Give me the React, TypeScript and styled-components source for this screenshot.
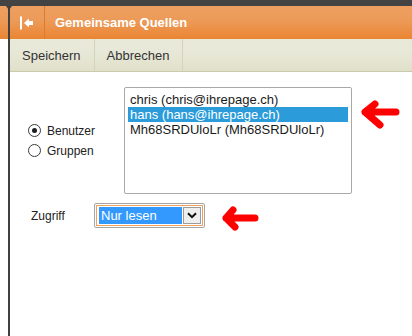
import React from "react";
import styled, { createGlobalStyle } from "styled-components";

// styled-components----------------------------------------------------------------

const GlobalStyle = createGlobalStyle`
  html, body, #root {
    height: 100%;
  }
  body {
    margin: 0;
    background: #ffffff;
    font-family: "Liberation Sans", Arial, sans-serif;
  }
`;

const Page = styled.div`
  position: relative;
  display: flex;
  flex-direction: column;
  height: 100%;
  overflow: hidden;
`;

const TopBar = styled.div`
  height: 6px;
  background: #434343;
  flex-shrink: 0;
`;

const Main = styled.div`
  display: flex;
  flex: 1;
`;

const orange = `linear-gradient(to bottom, #ee9f60 0%, #ec9a58 45%, #ea8531 100%)`;

const LeftStrip = styled.div`
  width: 8px;
  flex-shrink: 0;
`;

const StripHeader = styled.div`
  height: 33px;
  background: ${orange};
`;

const Divider = styled.div`
  position: relative;
  width: 2px;
  flex-shrink: 0;
  background: #404040;

  &::before {
    content: "";
    position: absolute;
    top: 0;
    left: -2px;
    border-left: 3px solid transparent;
    border-right: 3px solid transparent;
    border-top: 4px solid #404040;
  }
`;

const Panel = styled.div`
  flex: 1;
  display: flex;
  flex-direction: column;
`;

const Header = styled.div`
  height: 33px;
  display: flex;
  align-items: stretch;
  background: ${orange};
`;

const BackButton = styled.div`
  width: 34px;
  display: flex;
  align-items: center;
  justify-content: center;
  border-right: 1px solid #dd7a2c;
`;

const Title = styled.div`
  display: flex;
  align-items: center;
  padding-left: 10px;
  color: #ffffff;
  font-size: 13px;
  font-weight: bold;
`;

const Toolbar = styled.div`
  height: 32px;
  display: flex;
  background: linear-gradient(to bottom, #e9e9da 0%, #e8e8d8 40%, #e0e0ca 100%);
  border-bottom: 1px solid #cbcbac;
`;

const ToolButton = styled.div`
  display: flex;
  align-items: center;
  padding: 0 13px 0 12px;
  border-right: 1px solid #d3d3b6;
  color: #333333;
  font-size: 13px;
`;

const Content = styled.div`
  padding-top: 15px;
`;

const UserRow = styled.div`
  display: flex;
  align-items: center;
  padding-left: 18px;
`;

const RadioGroup = styled.div`
  width: 96px;
  display: flex;
  flex-direction: column;
`;

const RadioItem = styled.div`
  height: 20px;
  display: flex;
  align-items: center;
  gap: 6px;
  font-size: 12px;
  color: #222222;
`;

const RadioCircle = styled.span<{ $checked?: boolean }>`
  width: 13px;
  height: 13px;
  box-sizing: border-box;
  border-radius: 50%;
  border: 1px solid #3a3a3a;
  background: #ffffff;
  display: flex;
  align-items: center;
  justify-content: center;

  &::after {
    content: "";
    width: 5px;
    height: 5px;
    border-radius: 50%;
    background: ${(p) => (p.$checked ? "#1e1e1e" : "transparent")};
  }
`;

const ListBox = styled.div`
  width: 228px;
  height: 107px;
  box-sizing: border-box;
  border: 1px solid #a8a8a8;
  border-radius: 2px;
  padding: 4px 3px;
`;

const ListItem = styled.div<{ $selected?: boolean }>`
  height: 15px;
  line-height: 15px;
  padding-left: 2px;
  font-size: 13px;
  white-space: nowrap;
  color: ${(p) => (p.$selected ? "#ffffff" : "#1a1a1a")};
  background: ${(p) => (p.$selected ? "#2c9bd9" : "transparent")};
`;

const AccessRow = styled.div`
  display: flex;
  align-items: center;
  margin-top: 9px;
  padding-left: 21px;
`;

const AccessLabel = styled.div`
  width: 63px;
  font-size: 12px;
  color: #222222;
`;

const SelectOuter = styled.div`
  width: 111px;
  height: 25px;
  box-sizing: border-box;
  border: 1px solid #a5a5a5;
  border-radius: 2px;
  padding: 1px;
`;

const SelectInner = styled.div`
  height: 100%;
  box-sizing: border-box;
  border: 1px solid #efa260;
  padding: 1px 1px 1px 2px;
  display: flex;
  gap: 1px;
`;

const SelectValue = styled.div`
  flex: 1;
  background: #3399ff;
  color: #ffffff;
  font-size: 13px;
  line-height: 17px;
  padding-left: 2px;
`;

const SelectButton = styled.div`
  width: 18px;
  box-sizing: border-box;
  border: 1px solid #9c9c9c;
  background: #efefef;
  display: flex;
  align-items: center;
  justify-content: center;
`;

const Annotations = styled.svg`
  position: absolute;
  top: 0;
  left: 0;
  pointer-events: none;
`;

// ---------------------------------------------------------------------------------

const users = [
  { name: "chris", mail: "chris@ihrepage.ch" },
  { name: "hans", mail: "hans@ihrepage.ch", selected: true },
  { name: "Mh68SRDUloLr", mail: "Mh68SRDUloLr" },
];

const CollapseIcon = () => (
  <svg width="14" height="14" viewBox="0 0 14 14">
    <rect x="0" y="0.5" width="2" height="13" fill="#ffffff" />
    <polygon points="4,7 9,2.5 9,11.5" fill="#ffffff" />
    <rect x="8.5" y="5" width="4.5" height="4" fill="#ffffff" />
  </svg>
);

const Chevron = () => (
  <svg width="10" height="7" viewBox="0 0 10 7">
    <path d="M1 1.2 L5 5.2 L9 1.2" fill="none" stroke="#111111" strokeWidth="2" />
  </svg>
);

export default function App() {
  return (
    <Page>
      <GlobalStyle />
      <TopBar />
      <Main>
        <LeftStrip>
          <StripHeader />
        </LeftStrip>
        <Divider />
        <Panel>
          <Header>
            <BackButton>
              <CollapseIcon />
            </BackButton>
            <Title>Gemeinsame Quellen</Title>
          </Header>
          <Toolbar>
            <ToolButton>Speichern</ToolButton>
            <ToolButton>Abbrechen</ToolButton>
          </Toolbar>
          <Content>
            <UserRow>
              <RadioGroup>
                <RadioItem>
                  <RadioCircle $checked />
                  Benutzer
                </RadioItem>
                <RadioItem>
                  <RadioCircle />
                  Gruppen
                </RadioItem>
              </RadioGroup>
              <ListBox>
                {users.map((u) => (
                  <ListItem key={u.name} $selected={u.selected}>
                    {u.name} ({u.mail})
                  </ListItem>
                ))}
              </ListBox>
            </UserRow>
            <AccessRow>
              <AccessLabel>Zugriff</AccessLabel>
              <SelectOuter>
                <SelectInner>
                  <SelectValue>Nur lesen</SelectValue>
                  <SelectButton>
                    <Chevron />
                  </SelectButton>
                </SelectInner>
              </SelectOuter>
            </AccessRow>
          </Content>
        </Panel>
      </Main>
      <Annotations width="412" height="336" viewBox="0 0 412 336">
        <g fill="none" stroke="#ff0000" strokeWidth="7" strokeLinecap="round" strokeLinejoin="round">
          <path d="M396 112 L365 112 M375 104 L365 112 L380 125" />
          <path d="M255 218 L226 218 M233 210 L226 218 L235 227" />
        </g>
      </Annotations>
    </Page>
  );
}
